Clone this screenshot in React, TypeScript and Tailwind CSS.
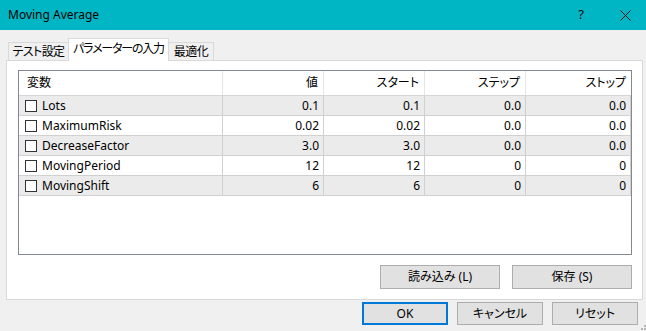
import React from 'react';

type Param = {
  name: string;
  value: string;
  start: string;
  step: string;
  stop: string;
};

const params: Param[] = [
  { name: 'Lots', value: '0.1', start: '0.1', step: '0.0', stop: '0.0' },
  { name: 'MaximumRisk', value: '0.02', start: '0.02', step: '0.0', stop: '0.0' },
  { name: 'DecreaseFactor', value: '3.0', start: '3.0', step: '0.0', stop: '0.0' },
  { name: 'MovingPeriod', value: '12', start: '12', step: '0', stop: '0' },
  { name: 'MovingShift', value: '6', start: '6', step: '0', stop: '0' },
];

const cols = 'grid grid-cols-[204px_101px_101px_101px_1fr]';

function Checkbox() {
  return <span className="block w-[12px] h-[12px] border border-[#333] bg-white shrink-0" />;
}

function Button({ label, w, primary }: { label: string; w: string; primary?: boolean }) {
  return (
    <button
      className={`${w} flex items-center justify-center whitespace-nowrap bg-[#e1e1e1] text-black ${
        primary ? 'border-2 border-[#0078d7]' : 'border border-[#adadad]'
      }`}
    >
      {label}
    </button>
  );
}

export default function App() {
  return (
    <div className="w-[646px] h-[331px] bg-[#f0f0f0] text-[12px] text-black font-['Noto_Sans','Noto_Sans_CJK_JP',sans-serif] [font-feature-settings:'palt'] flex flex-col relative overflow-hidden">
      {/* title bar */}
      <div className="h-[30px] bg-[#01b6c4] flex items-center shrink-0">
        <span className="pl-[8px] text-[12px]">Moving Average</span>
        <div className="ml-auto flex h-full">
          <div className="w-[46px] flex items-center justify-center text-[13px]">?</div>
          <div className="w-[42px] flex items-center justify-center">
            <svg width="11" height="11" viewBox="0 0 11 11">
              <path d="M0.5 0.5 L10.5 10.5 M10.5 0.5 L0.5 10.5" stroke="#111" strokeWidth="1" />
            </svg>
          </div>
        </div>
      </div>

      {/* tabs */}
      <div className="flex items-end pt-[8px] pl-[8px] whitespace-nowrap">
        <div className="w-[61px] h-[18px] border border-b-0 border-[#d9d9d9] flex items-center justify-center tracking-[-0.6px]">
          テスト設定
        </div>
        <div className="relative z-10 -ml-px -mb-px w-[101px] h-[23px] bg-white border border-b-0 border-[#d9d9d9] flex items-center justify-center pb-[2px] tracking-[-1.2px]">
          パラメーターの入力
        </div>
        <div className="-ml-px w-[46px] h-[18px] border border-b-0 border-[#d9d9d9] flex items-center justify-center tracking-[-0.5px]">
          最適化
        </div>
      </div>

      {/* tab panel */}
      <div className="ml-[6px] w-[637px] bg-white border border-[#d9d9d9] pl-[11px] pr-[10px] pt-[9px] pb-[10px]">
        <div className="h-[185px] border border-[#828790] bg-white">
          <div className={`${cols} h-[25px] border-b border-[#d5d5d5]`}>
            <div className="flex items-center pl-[8px] border-r border-[#e5e5e5]">変数</div>
            <div className="flex items-center justify-end pr-[5px] border-r border-[#e5e5e5]">値</div>
            <div className="flex items-center justify-end pr-[5px] border-r border-[#e5e5e5]">スタート</div>
            <div className="flex items-center justify-end pr-[5px] border-r border-[#e5e5e5]">ステップ</div>
            <div className="flex items-center justify-end pr-[5px]">ストップ</div>
          </div>
          {params.map((p, i) => (
            <div
              key={p.name}
              className={`${cols} h-[20px] border-b border-[#d0d0d0] ${i % 2 === 0 ? 'bg-[#ebebeb]' : 'bg-white'}`}
            >
              <div className="flex items-center pl-[6px] gap-[5px] border-r border-[#d0d0d0]">
                <Checkbox />
                <span>{p.name}</span>
              </div>
              <div className="flex items-center justify-end pr-[4px] border-r border-[#d0d0d0]">{p.value}</div>
              <div className="flex items-center justify-end pr-[4px] border-r border-[#d0d0d0]">{p.start}</div>
              <div className="flex items-center justify-end pr-[4px] border-r border-[#d0d0d0]">{p.step}</div>
              <div className="flex items-center justify-end pr-[4px] border-r border-[#d0d0d0]">{p.stop}</div>
            </div>
          ))}
        </div>
        <div className="flex justify-end gap-[12px] mt-[10px]">
          <div className="h-[24px] flex">
            <Button label="読み込み (L)" w="w-[120px]" />
          </div>
          <div className="h-[24px] flex">
            <Button label="保存 (S)" w="w-[120px]" />
          </div>
        </div>
      </div>

      {/* dialog buttons */}
      <div className="flex justify-end gap-[9px] pr-[8px] mt-[2px]">
        <div className="h-[23px] flex">
          <Button label="OK" w="w-[86px]" primary />
        </div>
        <div className="h-[23px] flex">
          <Button label="キャンセル" w="w-[86px]" />
        </div>
        <div className="h-[23px] flex">
          <Button label="リセット" w="w-[86px]" />
        </div>
      </div>

      {/* size grip */}
      <svg className="absolute right-0 bottom-0" width="8" height="8" viewBox="0 0 8 8">
        <rect x="6" y="2" width="2" height="2" fill="#b8b8b8" />
        <rect x="3" y="5" width="2" height="2" fill="#b8b8b8" />
        <rect x="6" y="5" width="2" height="2" fill="#b8b8b8" />
      </svg>
    </div>
  );
}
